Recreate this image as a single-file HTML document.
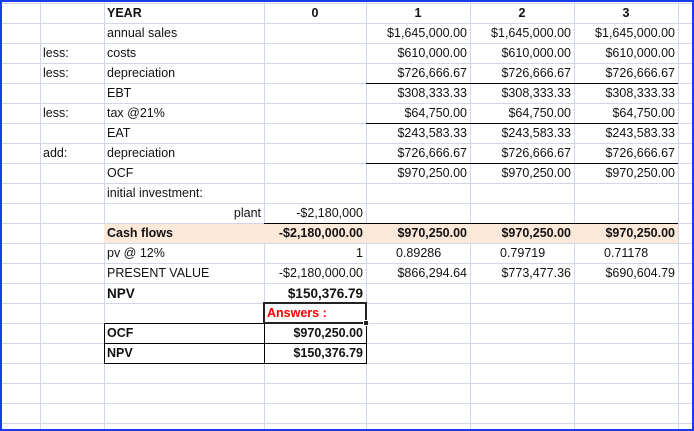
<!DOCTYPE html>
<html><head><meta charset="utf-8"><style>
body{margin:0;width:694px;height:431px;overflow:hidden;background:#fff;position:relative;font-family:"Liberation Sans",sans-serif;font-size:12.5px;color:#111;}
.v{position:absolute;top:0;height:431px;width:1px;background:#d0d7e5;}
.h{position:absolute;left:0;width:694px;height:1px;background:#d0d7e5;}
.c{position:absolute;height:20px;line-height:21px;white-space:nowrap;overflow:visible;}
.l{text-align:left;padding-left:3px;box-sizing:border-box;}
.r{text-align:right;padding-right:3px;box-sizing:border-box;}
.m{text-align:center;}
.b{font-weight:bold;}
.k{position:absolute;height:1px;background:#000;}
</style></head><body>
<div class="v" style="left:40px"></div><div class="v" style="left:104px"></div><div class="v" style="left:264px"></div><div class="v" style="left:366px"></div><div class="v" style="left:470px"></div><div class="v" style="left:574px"></div><div class="v" style="left:678px"></div>
<div class="h" style="top:3px"></div><div class="h" style="top:23px"></div><div class="h" style="top:43px"></div><div class="h" style="top:63px"></div><div class="h" style="top:83px"></div><div class="h" style="top:103px"></div><div class="h" style="top:123px"></div><div class="h" style="top:143px"></div><div class="h" style="top:163px"></div><div class="h" style="top:183px"></div><div class="h" style="top:203px"></div><div class="h" style="top:223px"></div><div class="h" style="top:243px"></div><div class="h" style="top:263px"></div><div class="h" style="top:283px"></div><div class="h" style="top:303px"></div><div class="h" style="top:323px"></div><div class="h" style="top:343px"></div><div class="h" style="top:363px"></div><div class="h" style="top:383px"></div><div class="h" style="top:403px"></div><div class="h" style="top:423px"></div>
<div style="position:absolute;left:104px;top:224px;width:574px;height:19px;background:#fde9d9"></div>
<div class="k" style="left:366px;top:83px;width:312px"></div>
<div class="k" style="left:366px;top:123px;width:312px"></div>
<div class="k" style="left:366px;top:163px;width:312px"></div>
<div class="k" style="left:264px;top:223px;width:414px"></div>
<div style="position:absolute;left:104px;top:323px;width:261px;height:39px;border:1px solid #000"></div>
<div class="k" style="left:104px;top:343px;width:262px"></div>
<div style="position:absolute;left:264px;top:323px;width:1px;height:40px;background:#000"></div>
<div style="position:absolute;left:263px;top:302px;width:100px;height:18px;border:2px solid #222"></div>
<div style="position:absolute;left:363px;top:320px;width:4px;height:4px;background:#222;border:1px solid #fff"></div>

<div class="c l b" style="left:104px;top:3px">YEAR</div>
<div class="c m b" style="left:264px;width:102px;top:3px">0</div>
<div class="c m b" style="left:366px;width:104px;top:3px">1</div>
<div class="c m b" style="left:470px;width:104px;top:3px">2</div>
<div class="c m b" style="left:574px;width:104px;top:3px">3</div>

<div class="c l" style="left:104px;top:23px">annual sales</div>
<div class="c l" style="left:40px;top:43px">less:</div><div class="c l" style="left:104px;top:43px">costs</div>
<div class="c l" style="left:40px;top:63px">less:</div><div class="c l" style="left:104px;top:63px">depreciation</div>
<div class="c l" style="left:104px;top:83px">EBT</div>
<div class="c l" style="left:40px;top:103px">less:</div><div class="c l" style="left:104px;top:103px">tax @21%</div>
<div class="c l" style="left:104px;top:123px">EAT</div>
<div class="c l" style="left:40px;top:143px">add:</div><div class="c l" style="left:104px;top:143px">depreciation</div>
<div class="c l" style="left:104px;top:163px">OCF</div>
<div class="c l" style="left:104px;top:183px">initial investment:</div>
<div class="c r" style="left:104px;width:160px;top:203px">plant</div>
<div class="c r" style="left:264px;width:102px;top:203px">-$2,180,000</div>

<div class="c r" style="left:366px;width:104px;top:23px">$1,645,000.00</div><div class="c r" style="left:470px;width:104px;top:23px">$1,645,000.00</div><div class="c r" style="left:574px;width:104px;top:23px">$1,645,000.00</div>
<div class="c r" style="left:366px;width:104px;top:43px">$610,000.00</div><div class="c r" style="left:470px;width:104px;top:43px">$610,000.00</div><div class="c r" style="left:574px;width:104px;top:43px">$610,000.00</div>
<div class="c r" style="left:366px;width:104px;top:63px">$726,666.67</div><div class="c r" style="left:470px;width:104px;top:63px">$726,666.67</div><div class="c r" style="left:574px;width:104px;top:63px">$726,666.67</div>
<div class="c r" style="left:366px;width:104px;top:83px">$308,333.33</div><div class="c r" style="left:470px;width:104px;top:83px">$308,333.33</div><div class="c r" style="left:574px;width:104px;top:83px">$308,333.33</div>
<div class="c r" style="left:366px;width:104px;top:103px">$64,750.00</div><div class="c r" style="left:470px;width:104px;top:103px">$64,750.00</div><div class="c r" style="left:574px;width:104px;top:103px">$64,750.00</div>
<div class="c r" style="left:366px;width:104px;top:123px">$243,583.33</div><div class="c r" style="left:470px;width:104px;top:123px">$243,583.33</div><div class="c r" style="left:574px;width:104px;top:123px">$243,583.33</div>
<div class="c r" style="left:366px;width:104px;top:143px">$726,666.67</div><div class="c r" style="left:470px;width:104px;top:143px">$726,666.67</div><div class="c r" style="left:574px;width:104px;top:143px">$726,666.67</div>
<div class="c r" style="left:366px;width:104px;top:163px">$970,250.00</div><div class="c r" style="left:470px;width:104px;top:163px">$970,250.00</div><div class="c r" style="left:574px;width:104px;top:163px">$970,250.00</div>

<div class="c l b" style="left:104px;top:223px">Cash flows</div>
<div class="c r b" style="left:264px;width:102px;top:223px">-$2,180,000.00</div>
<div class="c r b" style="left:366px;width:104px;top:223px">$970,250.00</div><div class="c r b" style="left:470px;width:104px;top:223px">$970,250.00</div><div class="c r b" style="left:574px;width:104px;top:223px">$970,250.00</div>

<div class="c l" style="left:104px;top:243px">pv @ 12%</div>
<div class="c r" style="left:264px;width:102px;top:243px">1</div>
<div class="c" style="left:396px;top:243px">0.89286</div><div class="c" style="left:500px;top:243px">0.79719</div><div class="c" style="left:604px;top:243px">0.71178</div>

<div class="c l" style="left:104px;top:263px">PRESENT VALUE</div>
<div class="c r" style="left:264px;width:102px;top:263px">-$2,180,000.00</div>
<div class="c r" style="left:366px;width:104px;top:263px">$866,294.64</div><div class="c r" style="left:470px;width:104px;top:263px">$773,477.36</div><div class="c r" style="left:574px;width:104px;top:263px">$690,604.79</div>

<div class="c l b" style="left:104px;top:283px;font-size:13.5px">NPV</div>
<div class="c r b" style="left:264px;width:102px;top:283px;font-size:13.5px">$150,376.79</div>

<div class="c l b" style="left:264px;top:303px;color:#ff0000">Answers :</div>
<div class="c l b" style="left:104px;top:323px">OCF</div>
<div class="c r b" style="left:264px;width:102px;top:323px">$970,250.00</div>
<div class="c l b" style="left:104px;top:343px">NPV</div>
<div class="c r b" style="left:264px;width:102px;top:343px">$150,376.79</div>

<div style="position:absolute;left:0;top:0;width:690px;height:427px;border:2px solid #1a3cf0"></div>
</body></html>
